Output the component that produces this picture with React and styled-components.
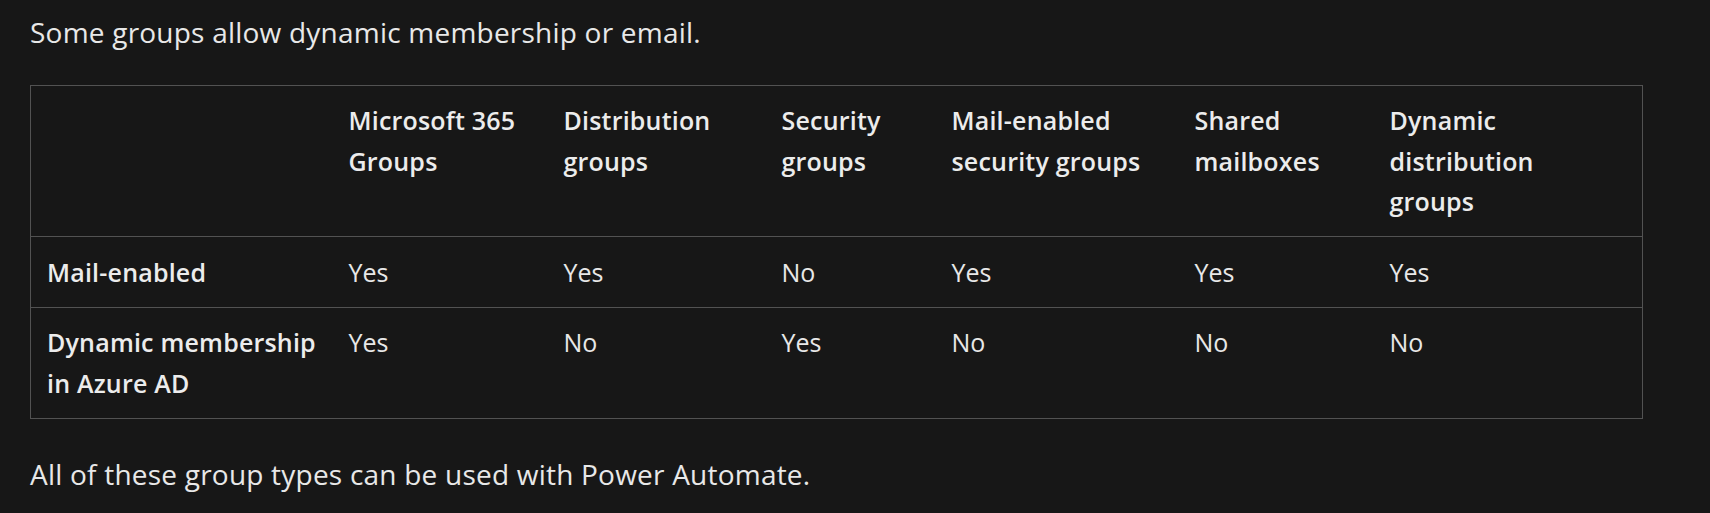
import React from 'react';
import styled, { createGlobalStyle } from 'styled-components';

const GlobalStyle = createGlobalStyle`
  html, body {
    margin: 0;
    padding: 0;
    background: #171717;
  }
  body {
    font-family: "Open Sans", "Noto Sans", "Liberation Sans", sans-serif;
    color: #e8e8e8;
  }
`;

const Page = styled.main`
  padding: 10px 0 0 30px;
  width: 1612px;
`;

const Paragraph = styled.p`
  margin: 0 0 ${(p) => p.$gap || 0}px;
  font-size: 28px;
  line-height: 44.8px;
  letter-spacing: 0.22px;
`;

const Table = styled.table`
  width: 1612px;
  table-layout: fixed;
  border-collapse: collapse;
  border: 1px solid #525252;
  margin-bottom: 33px;
  font-size: 25px;
  line-height: 40.5px;
`;

const Row = styled.tr`
  border-bottom: 1px solid #525252;
`;

const HeadCell = styled.th`
  text-align: left;
  vertical-align: top;
  font-weight: 600;
  letter-spacing: 0.2px;
  color: #ececec;
  padding: 14.5px ${(p) => p.$padRight || 16}px 14.5px 16px;
`;

const Cell = styled.td`
  text-align: left;
  vertical-align: top;
  font-weight: 400;
  padding: 14.5px 16px;
`;

const columns = [
  { label: '', width: 302 },
  { label: 'Microsoft 365 Groups', width: 215 },
  { label: 'Distribution groups', width: 218 },
  { label: 'Security groups', width: 170 },
  { label: 'Mail-enabled security groups', width: 243 },
  { label: 'Shared mailboxes', width: 195 },
  { label: 'Dynamic distribution groups', width: 269, padRight: 90 },
];

const rows = [
  { label: 'Mail-enabled', values: ['Yes', 'Yes', 'No', 'Yes', 'Yes', 'Yes'] },
  { label: 'Dynamic membership in Azure AD', values: ['Yes', 'No', 'Yes', 'No', 'No', 'No'] },
];

export default function App() {
  return (
    <>
      <GlobalStyle />
      <Page>
        <Paragraph $gap={30}>Some groups allow dynamic membership or email.</Paragraph>
        <Table>
          <colgroup>
            {columns.map((c, i) => (
              <col key={i} style={{ width: c.width }} />
            ))}
          </colgroup>
          <thead>
            <Row>
              {columns.map((c, i) => (
                <HeadCell key={i} $padRight={c.padRight}>
                  {c.label}
                </HeadCell>
              ))}
            </Row>
          </thead>
          <tbody>
            {rows.map((r) => (
              <Row key={r.label}>
                <HeadCell scope="row">{r.label}</HeadCell>
                {r.values.map((v, i) => (
                  <Cell key={i}>{v}</Cell>
                ))}
              </Row>
            ))}
          </tbody>
        </Table>
        <Paragraph>All of these group types can be used with Power Automate.</Paragraph>
      </Page>
    </>
  );
}
